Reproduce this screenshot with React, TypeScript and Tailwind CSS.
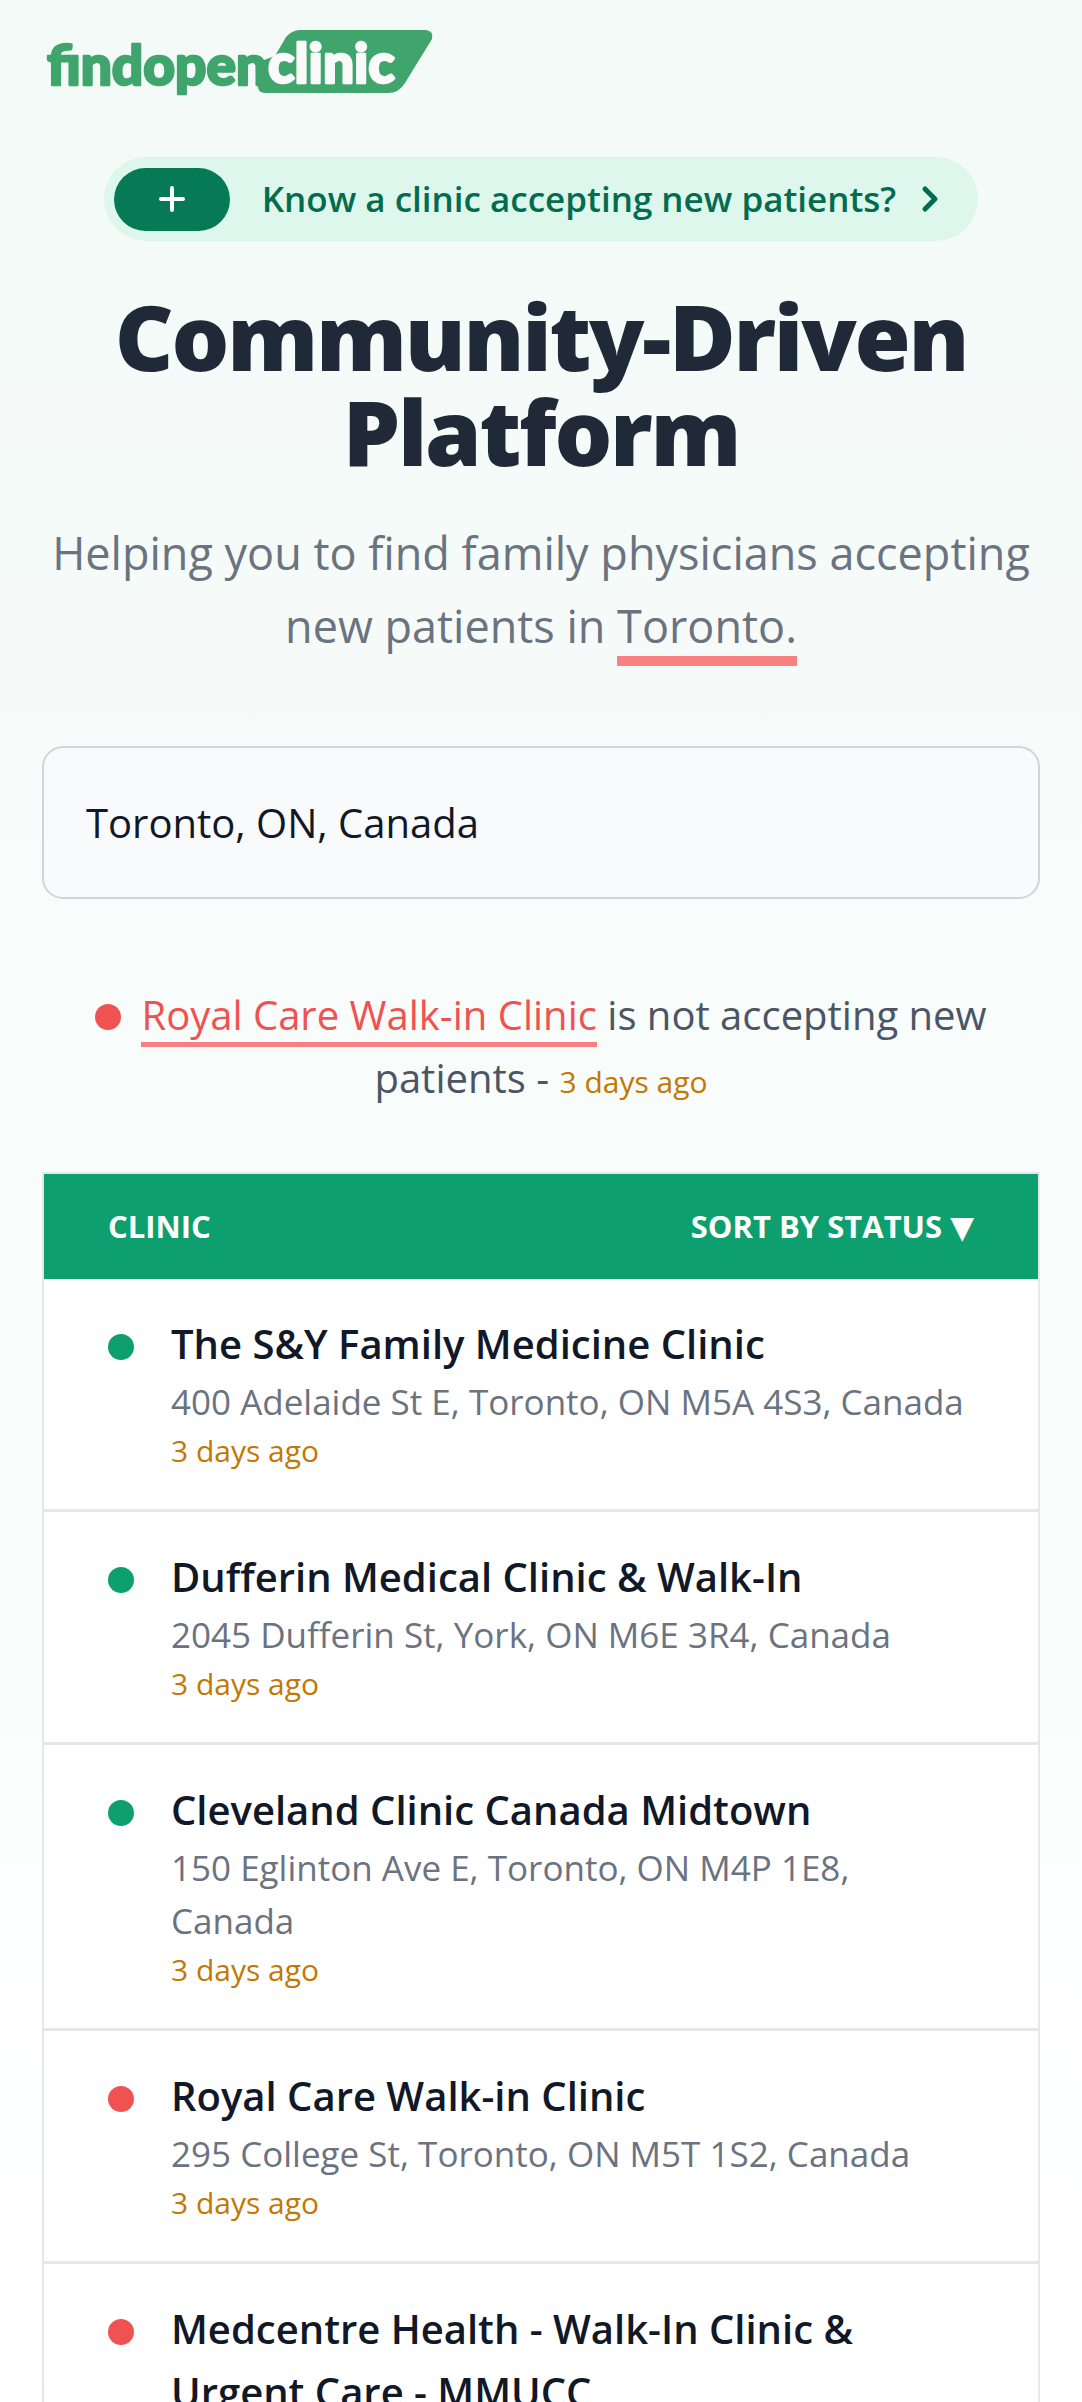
import React from 'react';

type Status = 'open' | 'closed';

interface Clinic {
  name: string;
  address?: string;
  updated?: string;
  status: Status;
}

const clinics: Clinic[] = [
  {
    name: 'The S&Y Family Medicine Clinic',
    address: '400 Adelaide St E, Toronto, ON M5A 4S3, Canada',
    updated: '3 days ago',
    status: 'open'
  },
  {
    name: 'Dufferin Medical Clinic & Walk-In',
    address: '2045 Dufferin St, York, ON M6E 3R4, Canada',
    updated: '3 days ago',
    status: 'open'
  },
  {
    name: 'Cleveland Clinic Canada Midtown',
    address: '150 Eglinton Ave E, Toronto, ON M4P 1E8, Canada',
    updated: '3 days ago',
    status: 'open'
  },
  {
    name: 'Royal Care Walk-in Clinic',
    address: '295 College St, Toronto, ON M5T 1S2, Canada',
    updated: '3 days ago',
    status: 'closed'
  },
  {
    name: 'Medcentre Health - Walk-In Clinic & Urgent Care - MMUCC',
    status: 'closed'
  }
];

const statusColors: Record<Status, string> = {
  open: 'bg-[#0e9f6e]',
  closed: 'bg-[#f05252]'
};

const Logo: React.FC = () => (
  <svg
    width="388"
    height="72"
    viewBox="46 26 388 72"
    fontFamily="Lato, sans-serif"
    fontWeight="900"
    fontSize="55"
    strokeWidth="2.5"
    strokeLinejoin="round"
    role="img"
    aria-label="findopenclinic"
  >
    <path
      d="M299 30H426Q434 31 432 39L405 83Q399 93 388 93H265Q257 92 258 85L262 80L264 60L275 56L286 37Q291 31 299 30Z"
      fill="#3fa56d"
    />
    <text x="47" y="85" fill="#3fa56d" stroke="#3fa56d">
      findopen
    </text>
    <text x="268" y="83" fill="#fafafa" stroke="#fafafa">
      clinic
    </text>
  </svg>
);

const ClinicRow: React.FC<{ clinic: Clinic }> = ({ clinic }) => (
  <tr className="border-b-3 border-gray-200 last:border-b-0">
    <td colSpan={2} className="px-16 pt-[33px] pb-[35px]">
      <div className="flex items-start gap-[37px]">
        <span className={`mt-[22px] size-[26px] shrink-0 rounded-full ${statusColors[clinic.status]}`} />
        <div>
          <div className="text-[40px] leading-[63px] font-semibold text-[#111827]">{clinic.name}</div>
          {clinic.address && (
            <div className="text-[35px] leading-[53px] text-[#6b7280]">{clinic.address}</div>
          )}
          {clinic.updated && (
            <div className="text-[30px] leading-[46px] text-[#c27803]">{clinic.updated}</div>
          )}
        </div>
      </div>
    </td>
  </tr>
);

export default function App() {
  return (
    <div className="h-screen overflow-hidden bg-linear-to-b from-[#f3faf7] to-white font-['Open_Sans',sans-serif]">
      <header className="px-[46px] pt-[26px]">
        <a href="#" className="inline-block align-top">
          <Logo />
        </a>
      </header>

      <main className="px-[42px] pt-[59px]">
        <div className="flex justify-center">
          <a
            href="#"
            className="flex h-[84px] items-center rounded-full bg-[#def7ec] pr-[38px] pl-[10px] text-[#046c4e]"
          >
            <span className="mr-8 flex h-[63px] w-[116px] items-center justify-center rounded-full bg-[#057a55]">
              <svg width="26" height="26" viewBox="0 0 26 26" stroke="#fff" strokeWidth="4" strokeLinecap="round">
                <path d="M13 2V24M2 13H24" />
              </svg>
            </span>
            <span className="text-[35px] font-semibold">Know a clinic accepting new patients?</span>
            <svg
              className="ml-6"
              width="20"
              height="28"
              viewBox="0 0 20 28"
              fill="none"
              stroke="currentColor"
              strokeWidth="5"
              strokeLinecap="round"
              strokeLinejoin="round"
            >
              <path d="M5 4L15 14L5 24" />
            </svg>
          </a>
        </div>

        <h1 className="mt-12 text-center text-[91px] leading-[95px] font-extrabold tracking-tight text-[#1f2937]">
          Community-Driven Platform
        </h1>

        <p className="mt-[37px] text-center text-[45px] leading-[73px] text-[#6b7280]">
          Helping you to find family physicians accepting new patients in{' '}
          <span className="border-b-10 border-[#f98080]">Toronto.</span>
        </p>

        <input
          type="text"
          aria-label="Location"
          defaultValue="Toronto, ON, Canada"
          className="mt-[84px] block h-[153px] w-full rounded-[21px] border-2 border-[#d1d5db] bg-[#f9fafb] px-[42px] text-[40px] text-[#111827]"
        />

        <p className="mt-[84px] text-center text-[40px] leading-[63px] text-[#4b5563]">
          <span className="mr-5 inline-block size-[26px] rounded-full bg-[#f05252]" />
          <a href="#" className="border-b-5 border-[#f98080] text-[#f05252]">
            Royal Care Walk-in Clinic
          </a>{' '}
          is not accepting new patients - <span className="text-[30px] text-[#c27803]">3 days ago</span>
        </p>

        <div className="mt-[59px] border-2 border-gray-200 bg-white">
          <table className="w-full">
            <thead className="bg-[#0e9f6e] text-[31px] font-bold text-white">
              <tr className="h-[105px]">
                <th scope="col" className="pl-16 text-left uppercase">
                  Clinic
                </th>
                <th scope="col" className="pr-16 text-right">
                  <button type="button" className="font-bold uppercase">
                    Sort by status <span className="font-['DejaVu_Sans',sans-serif]">▼</span>
                  </button>
                </th>
              </tr>
            </thead>
            <tbody>
              {clinics.map((clinic) => (
                <ClinicRow key={clinic.name} clinic={clinic} />
              ))}
            </tbody>
          </table>
        </div>
      </main>
    </div>
  );
}
